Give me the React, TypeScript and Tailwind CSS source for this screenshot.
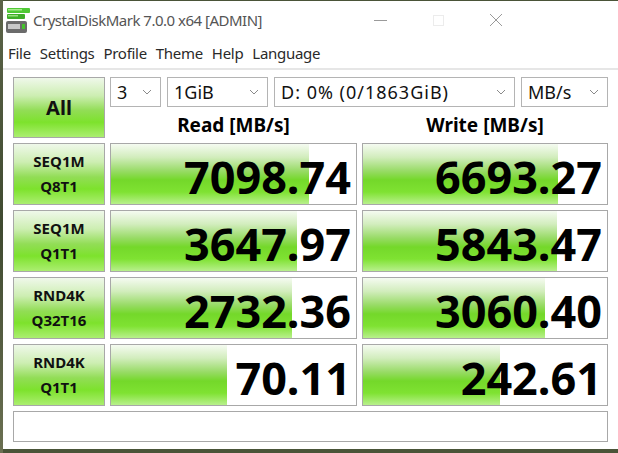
import React from 'react';

const FONT = { fontFamily: '"Noto Sans", "Open Sans", Arial, sans-serif' };

type Row = { a: string; b: string; read: string; rp: number; write: string; wp: number };

const rows: Row[] = [
  { a: 'SEQ1M', b: 'Q8T1', read: '7098.74', rp: 81, write: '6693.27', wp: 80 },
  { a: 'SEQ1M', b: 'Q1T1', read: '3647.97', rp: 76, write: '5843.47', wp: 79.5 },
  { a: 'RND4K', b: 'Q32T16', read: '2732.36', rp: 74, write: '3060.40', wp: 74.6 },
  { a: 'RND4K', b: 'Q1T1', read: '70.11', rp: 47.5, write: '242.61', wp: 56 },
];

const fill = 'bg-[linear-gradient(to_bottom,#f5fbf1_0%,#d2edbd_22%,#98db66_45%,#74d82a_60%,#7fe232_80%,#b8f08c_100%)]';
const btn = 'bg-[linear-gradient(to_bottom,#eff8ea_0%,#cdeeb2_30%,#92dd56_55%,#7de22c_75%,#abee70_100%)]';

const Combo = ({ w, text, wide }: { w: string; text: string; wide?: boolean }) => (
  <div className={`${w} h-[30px] border border-[#b4b4b4] bg-white flex items-center pl-[6px] pr-[8px] text-[18px] text-[#111]`}>
    <span className={`flex-1 leading-none ${wide ? 'tracking-[1px]' : ''}`}>{text}</span>
    <svg width="10" height="6" viewBox="0 0 10 6" className="shrink-0">
      <path d="M1 1 L5 5 L9 1" fill="none" stroke="#8a8a8a" strokeWidth="1" />
    </svg>
  </div>
);

const Result = ({ value, pct }: { value: string; pct: number }) => (
  <div className="relative h-[62px] border border-[#a8a8a8] bg-white">
    <div className={`absolute left-0 top-0 bottom-0 ${fill}`} style={{ width: `${pct}%` }} />
    <div className="relative h-full flex items-center justify-end pr-[5px] pt-[4px] text-[45px] font-bold text-black leading-none">
      {value}
    </div>
  </div>
);

export default function App() {
  return (
    <div className="w-[618px] h-[453px] bg-[#4a5438] flex overflow-hidden" style={FONT}>
      <div className="w-[3px] shrink-0 bg-[linear-gradient(to_bottom,#5c6448,#3f4a30,#6b7052)]" />
      <div className="flex-1 mt-px mb-[4px] bg-white flex flex-col">
        {/* title bar */}
        <div className="h-[38px] flex items-center shrink-0">
          <svg width="26" height="28" viewBox="0 0 26 28" className="ml-[2px] mr-[2px]">
            <rect x="2" y="2" width="23" height="5" rx="1" fill="#4fc934" />
            <rect x="3" y="3" width="14" height="1.5" fill="#a8ec8c" />
            <rect x="2" y="8" width="18" height="5" rx="1" fill="#3fae28" />
            <rect x="3" y="9" width="10" height="1.5" fill="#96e07a" />
            <rect x="1" y="15" width="21" height="12" rx="2" fill="#6b6b6b" />
            <rect x="3" y="18" width="12" height="5" fill="#c8c8c8" />
            <rect x="17" y="18" width="3" height="5" fill="#45c42c" />
          </svg>
          <span className="text-[15px] text-[#555] tracking-[-0.5px]">CrystalDiskMark 7.0.0 x64 [ADMIN]</span>
          <div className="flex-1" />
          <div className="w-[58px] flex justify-center"><div className="w-[13px] h-px bg-[#9a9a9a]" /></div>
          <div className="w-[58px] flex justify-center"><div className="w-[11px] h-[11px] border border-[#ececec]" /></div>
          <div className="w-[58px] flex justify-center mr-[93px]">
            <svg width="14" height="14" viewBox="0 0 14 14">
              <path d="M1 1 L13 13 M13 1 L1 13" stroke="#9a9a9a" strokeWidth="1" />
            </svg>
          </div>
        </div>
        {/* menu bar */}
        <div className="h-[31px] flex items-center gap-[9px] pl-[5px] text-[15px] text-[#2a2a2a] tracking-[-0.3px] border-b-2 border-[#e6e6e6] shrink-0">
          <span>File</span>
          <span>Settings</span>
          <span>Profile</span>
          <span>Theme</span>
          <span>Help</span>
          <span>Language</span>
        </div>
        {/* main */}
        <div className="pl-[10px] pt-[7px] flex flex-col gap-[5px]">
          <div className="flex gap-[5px]">
            <div className={`w-[92px] h-[61px] border border-[#a8a8a8] ${btn} flex items-center justify-center text-[20px] font-bold text-[#111]`}>
              All
            </div>
            <div className="flex flex-col">
              <div className="flex gap-[6px]">
                <Combo w="w-[51px]" text="3" />
                <Combo w="w-[101px]" text="1GiB" />
                <Combo w="w-[241px]" text="D: 0% (0/1863GiB)" wide />
                <Combo w="w-[87px]" text="MB/s" />
              </div>
              <div className="h-[31px] flex text-[19px] font-bold text-black leading-none">
                <div className="w-[247px] flex items-end justify-center pb-[3px]">Read [MB/s]</div>
                <div className="w-[5px]" />
                <div className="w-[246px] flex items-end justify-center pb-[3px]">Write [MB/s]</div>
              </div>
            </div>
          </div>
          {rows.map((r, i) => (
            <div key={i} className="grid grid-cols-[92px_247px_246px] gap-x-[5px]">
              <div className={`h-[62px] border border-[#a8a8a8] ${btn} flex flex-col items-center justify-center text-[15px] font-bold text-[#111] leading-[25px]`}>
                <span>{r.a}</span>
                <span>{r.b}</span>
              </div>
              <Result value={r.read} pct={r.rp} />
              <Result value={r.write} pct={r.wp} />
            </div>
          ))}
          <div className="w-[595px] h-[31px] border border-[#a8a8a8] bg-white" />
        </div>
      </div>
    </div>
  );
}
